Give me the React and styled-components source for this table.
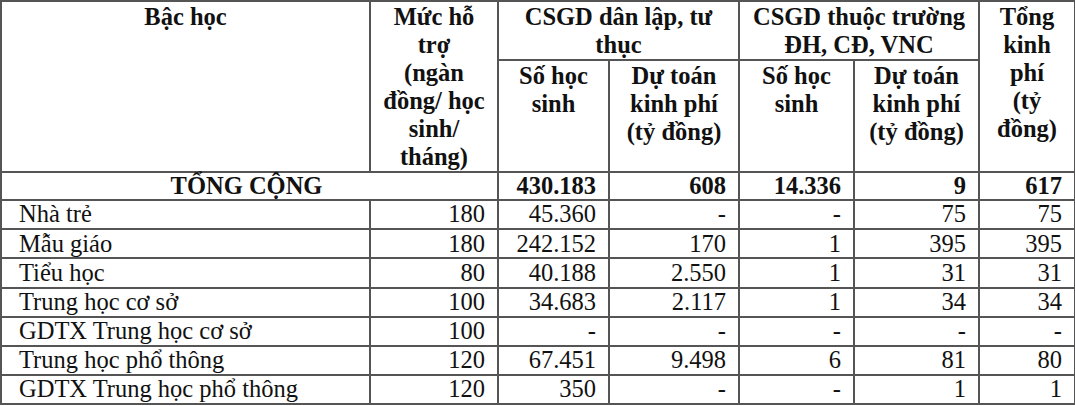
import React from 'react';
import styled, { createGlobalStyle } from 'styled-components';

const GlobalStyle = createGlobalStyle`
  html, body {
    margin: 0;
    padding: 0;
    background: #ffffff;
  }
  body {
    font-family: "Liberation Serif", Tinos, "Times New Roman", serif;
    color: #111111;
  }
`;

const Table = styled.table`
  width: 1074px;
  border-collapse: collapse;
  table-layout: fixed;
  font-family: "Liberation Serif", Tinos, "Times New Roman", serif;
  font-size: 24.5px;
  color: #111111;
`;

const HeadCell = styled.th`
  border: 2px solid #555555;
  padding: 1px 4px 0;
  vertical-align: top;
  text-align: center;
  font-weight: bold;
  line-height: 28px;
  height: ${p => p.$h || 'auto'};
  box-sizing: border-box;
`;

const Cell = styled.td`
  border: 2px solid #555555;
  padding: 0 ${p => (p.$left ? '6px' : '12px')} 0 ${p => (p.$left ? '17px' : '6px')};
  text-align: ${p => (p.$left ? 'left' : p.$center ? 'center' : 'right')};
  font-weight: ${p => (p.$bold ? 'bold' : 'normal')};
  line-height: 1;
  white-space: nowrap;
  vertical-align: middle;
`;

const Row = styled.tr`
  height: ${p => p.$h || '29.2px'};
`;

const Lines = ({ lines }) =>
  lines.map((l, i) => (
    <React.Fragment key={i}>
      {i > 0 && <br />}
      {l}
    </React.Fragment>
  ));

const columns = [369, 128, 111, 130, 115, 125, 96];

const total = ['430.183', '608', '14.336', '9', '617'];

const rows = [
  ['Nhà trẻ', '180', '45.360', '-', '-', '75', '75'],
  ['Mẫu giáo', '180', '242.152', '170', '1', '395', '395'],
  ['Tiểu học', '80', '40.188', '2.550', '1', '31', '31'],
  ['Trung học cơ sở', '100', '34.683', '2.117', '1', '34', '34'],
  ['GDTX Trung học cơ sở', '100', '-', '-', '-', '-', '-'],
  ['Trung học phổ thông', '120', '67.451', '9.498', '6', '81', '80'],
  ['GDTX Trung học phổ thông', '120', '350', '-', '-', '1', '1'],
];

const App = () => {
  return (
    <>
      <GlobalStyle />
      <Table>
        <colgroup>
          {columns.map((w, i) => (
            <col key={i} style={{ width: w }} />
          ))}
        </colgroup>
        <thead>
          <tr>
            <HeadCell rowSpan={2}>Bậc học</HeadCell>
            <HeadCell rowSpan={2}>
              <Lines lines={['Mức hỗ', 'trợ', '(ngàn', 'đồng/ học', 'sinh/', 'tháng)']} />
            </HeadCell>
            <HeadCell colSpan={2} $h="56px">
              <Lines lines={['CSGD dân lập, tư', 'thục']} />
            </HeadCell>
            <HeadCell colSpan={2} $h="56px">
              <Lines lines={['CSGD thuộc trường', 'ĐH, CĐ, VNC']} />
            </HeadCell>
            <HeadCell rowSpan={2}>
              <Lines lines={['Tổng', 'kinh', 'phí', '(tỷ', 'đồng)']} />
            </HeadCell>
          </tr>
          <tr>
            <HeadCell $h="112px">
              <Lines lines={['Số học', 'sinh']} />
            </HeadCell>
            <HeadCell>
              <Lines lines={['Dự toán', 'kinh phí', '(tỷ đồng)']} />
            </HeadCell>
            <HeadCell>
              <Lines lines={['Số học', 'sinh']} />
            </HeadCell>
            <HeadCell>
              <Lines lines={['Dự toán', 'kinh phí', '(tỷ đồng)']} />
            </HeadCell>
          </tr>
        </thead>
        <tbody>
          <Row $h="28px">
            <Cell colSpan={2} $center $bold>TỔNG CỘNG</Cell>
            {total.map((v, i) => (
              <Cell key={i} $bold>{v}</Cell>
            ))}
          </Row>
          {rows.map(r => (
            <Row key={r[0]}>
              {r.map((v, i) => (
                <Cell key={i} $left={i === 0}>{v}</Cell>
              ))}
            </Row>
          ))}
        </tbody>
      </Table>
    </>
  );
};

export default App;
